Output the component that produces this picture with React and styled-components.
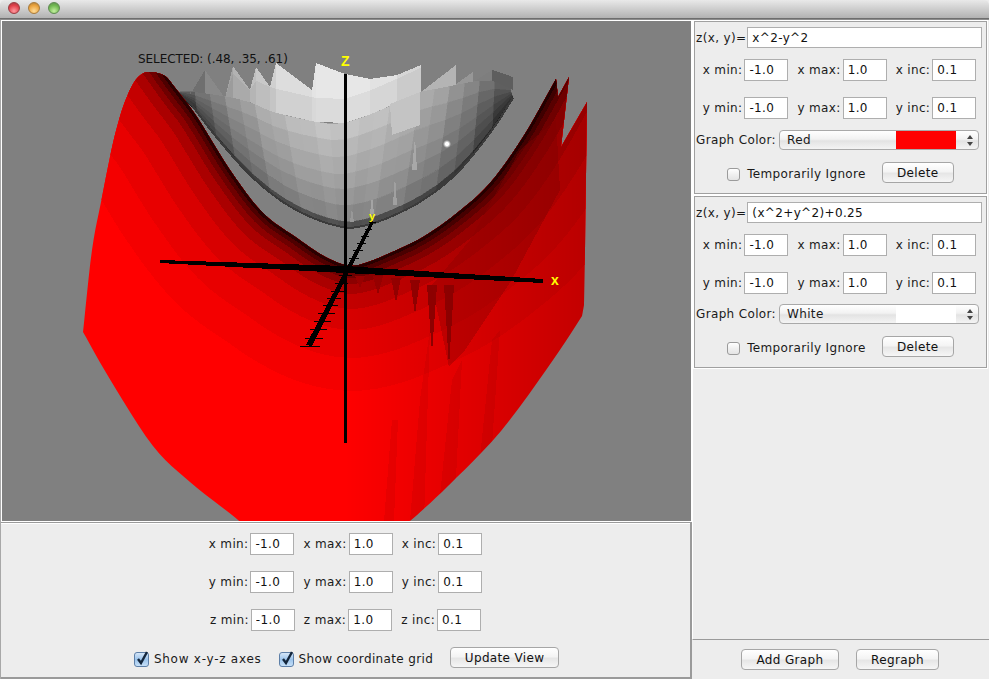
import React from "react";
import styled, { createGlobalStyle } from "styled-components";

const FONT = `"DejaVu Sans", "Liberation Sans", sans-serif`;
const TRACK = "0.35px";

const GlobalStyle = createGlobalStyle`
  html, body { margin: 0; padding: 0; background: #fff; overflow: hidden; }
  body { font-family: ${FONT}; }
`;

/* ---------- surface plot geometry, all in page pixels ---------- */

const interp = (pts, x) => {
  if (x <= pts[0][0]) return pts[0][1];
  for (let i = 1; i < pts.length; i++) {
    if (x <= pts[i][0]) {
      const t = (x - pts[i - 1][0]) / (pts[i][0] - pts[i - 1][0] || 1);
      return pts[i - 1][1] + (pts[i][1] - pts[i - 1][1]) * t;
    }
  }
  return pts[pts.length - 1][1];
};

// catmull-rom resample so the hand read points give a round curve
const smooth = (pts, steps = 6) => {
  const out = [];
  for (let i = 0; i < pts.length - 1; i++) {
    const p0 = pts[Math.max(0, i - 1)];
    const p1 = pts[i];
    const p2 = pts[i + 1];
    const p3 = pts[Math.min(pts.length - 1, i + 2)];
    for (let s = 0; s < steps; s++) {
      const t = s / steps;
      const f = (a, b, c, d) =>
        0.5 * (2 * b + (c - a) * t + (2 * a - 5 * b + 4 * c - d) * t * t + (3 * b - a - 3 * c + d) * t * t * t);
      out.push([f(p0[0], p1[0], p2[0], p3[0]), f(p0[1], p1[1], p2[1], p3[1])]);
    }
  }
  out.push(pts[pts.length - 1]);
  return out;
};

const toPoints = (pts) => pts.map((p) => `${p[0].toFixed(1)},${p[1].toFixed(1)}`).join(" ");
const grey = (v) => {
  const g = Math.max(0, Math.min(255, Math.round(v)));
  return `rgb(${g},${g},${g})`;
};

const INNER_EDGE = [
  [173, 85], [197, 117], [230, 170], [263, 213], [297, 238], [322, 255], [345, 265], [362, 264], [390, 253],
  [423, 237], [457, 213], [490, 183], [523, 137], [556, 79],
];
const RED_OUTLINE = [
  ...smooth([[173, 85], [165, 76], [152, 72], [142, 74], [133, 84], [123, 107], [113, 143], [102, 197], [92, 250], [83, 332]]),
  ...smooth([[83, 332], [111, 381], [153, 446], [190, 482], [232, 515], [240, 522]]),
  ...smooth([[408, 522], [417, 515], [449, 485], [501, 431], [553, 360], [582, 316]]),
  [584, 305], [585, 250], [587, 102], [561, 147], [569, 77], [558, 97],
  ...smooth(INNER_EDGE).reverse(),
];
const RED_INNER = smooth([[120, 10], ...INNER_EDGE, [590, 20]]);
const RED_BANDS = [
  [125, "#f40000"], [92, "#e80000"], [64, "#d80000"], [43, "#c40000"], [28, "#aa0000"],
  [18, "#8c0000"], [12, "#6e0000"], [7, "#4e0000"], [3, "#2a0000"],
];
const offsetCurve = (pts, d) =>
  pts.map((p, i) => {
    const a = pts[Math.max(0, i - 1)];
    const b = pts[Math.min(pts.length - 1, i + 1)];
    const len = Math.hypot(b[0] - a[0], b[1] - a[1]) || 1;
    return [p[0] - ((b[1] - a[1]) / len) * d, p[1] + ((b[0] - a[0]) / len) * d];
  });
const RED_SPIKES = [
  [360, 276, 288], [378, 276, 295], [396, 278, 302], [415, 280, 314], [432, 285, 353], [449, 285, 367],
];
const RED_STREAKS = [
  "410,521 420,400 430,330 424,521",
  "440,495 452,380 462,360 456,478",
  "480,458 492,340 500,330 492,445",
  "384,521 392,420 398,420 394,521",
];

const GREY_BOTTOM = smooth([
  [177, 93], [190, 103], [213, 133], [247, 172], [280, 200], [313, 218], [343, 227], [363, 226], [390, 217],
  [423, 200], [457, 173], [490, 133], [513, 98],
]);
const GREY_SHELF = smooth([
  [177, 92], [195, 92], [243, 100], [273, 112], [317, 122], [345, 123], [388, 107], [420, 92], [456, 85],
  [490, 80], [513, 90],
]);
const GREY_TOP = [
  [190, 95], [205, 70], [225, 98], [233, 66], [250, 90], [256, 67], [270, 87], [276, 63], [312, 90], [316, 63],
  [345, 74], [370, 79], [397, 75], [421, 65], [421, 92], [456, 65], [456, 84], [473, 72], [473, 82], [492, 70],
  [513, 77], [513, 90],
];
const GREY_LEVELS = [0, 0.06, 0.214, 0.37, 0.515, 0.68, 0.845, 1];
const GREY_TONES = [80, 135, 150, 162, 172, 182, 195];
const COLS = 22;

const sideShade = (x, k = 0.68) => 1 - k * Math.pow(Math.min(1, Math.abs(x - 345) / 168), 2.2);

const buildGreyCells = () => {
  const cells = [];
  const bottomX = (w) => 345 + 168 * Math.sign(w) * Math.pow(Math.abs(w), 1.35);
  const topX = (w) => 345 + 165 * w;
  const at = (w, v) => {
    const bx = bottomX(w);
    const tx = topX(w);
    const by = interp(GREY_BOTTOM, bx);
    const ty = interp(GREY_SHELF, tx);
    return [bx + (tx - bx) * v, by + (ty - by) * v];
  };
  for (let c = 0; c < COLS; c++) {
    const w0 = (c / COLS) * 2 - 1;
    const w1 = ((c + 1) / COLS) * 2 - 1;
    const jitter = c % 2 ? 2 : -2;
    for (let b = 0; b < GREY_TONES.length; b++) {
      const v0 = GREY_LEVELS[b];
      const v1 = GREY_LEVELS[b + 1];
      const mid = (at(w0, v0)[0] + at(w1, v1)[0]) / 2;
      cells.push({
        key: `${c}-${b}`,
        points: toPoints([at(w0, v0), at(w1, v0), at(w1, v1), at(w0, v1)]),
        fill: grey((GREY_TONES[b] + jitter) * sideShade(mid, 0.78 - b * 0.03)),
      });
    }
  }
  return cells;
};

const buildGreyTop = () => {
  const out = [];
  for (let i = 0; i < GREY_TOP.length - 1; i++) {
    const [ax, ay] = GREY_TOP[i];
    const [bx, by] = GREY_TOP[i + 1];
    if (ax === bx) continue;
    const shade = sideShade((ax + bx) / 2);
    const sa = interp(GREY_SHELF, ax);
    const sb = interp(GREY_SHELF, bx);
    out.push({ key: `t${i}`, points: toPoints([[ax, sa], [ax, ay], [bx, by], [bx, sb]]), fill: grey(226 * shade + 6) });
    out.push({
      key: `m${i}`,
      points: toPoints([[ax, sa], [ax, Math.max(sa - 24, ay)], [bx, Math.max(sb - 24, by)], [bx, sb]]),
      fill: grey(214 * shade + 6),
    });
  }
  return out;
};

const GREY_CELLS = buildGreyCells();
const GREY_TOP_CELLS = buildGreyTop();
const Y_TICKS = [346, 338, 329, 321, 313, 305, 298, 291, 283, 275, 258, 250, 243, 236, 229, 222];

const SurfacePlot = () => (
  <PlotSvg viewBox="2 21 689 500" width="689" height="500" shapeRendering="crispEdges">
    <defs>
      <clipPath id="redClip">
        <polygon points={toPoints(RED_OUTLINE)} />
      </clipPath>
      <linearGradient id="rightShade" gradientUnits="userSpaceOnUse" x1="345" y1="0" x2="590" y2="0">
        <stop offset="0" stopColor="#000" stopOpacity="0" />
        <stop offset="1" stopColor="#000" stopOpacity="0.24" />
      </linearGradient>
      <radialGradient id="dotGlow">
        <stop offset="0.4" stopColor="#fff" />
        <stop offset="1" stopColor="#fff" stopOpacity="0" />
      </radialGradient>
    </defs>
    <rect x="2" y="21" width="689" height="500" fill="#808080" />

    {GREY_CELLS.map((c) => <polygon key={c.key} points={c.points} fill={c.fill} stroke={c.fill} strokeWidth="0.5" />)}
    {GREY_TOP_CELLS.map((c) => <polygon key={c.key} points={c.points} fill={c.fill} />)}
    <polygon points="390,104 420,92 420,125 392,135" fill="#c4c4c4" />
    <polygon points="415,137 417,170 412,170" fill="#a8a8a8" />
    <polygon points="395,175 397,205 393,205" fill="#a0a0a0" />
    <polygon points="372,195 374,214 370,214" fill="#a4a4a4" />
    <polygon points="352,208 354,222 350,222" fill="#989898" />
    <polyline points={toPoints(GREY_BOTTOM)} fill="none" stroke="#3a3a3a" strokeWidth="2" />

    <g clipPath="url(#redClip)">
      <rect x="2" y="21" width="689" height="500" fill="#ff0000" />
      {RED_BANDS.map(([d, color]) => (
        <polygon key={d} points={toPoints([...offsetCurve(RED_INNER, d), [700, 0], [0, 0]])} fill={color} />
      ))}
      {RED_SPIKES.map(([x, y0, y1]) => (
        <polygon key={x} points={`${x - 5},${y0} ${x + 5},${y0} ${x},${y1}`} fill="#9a0000" />
      ))}
      <polygon points="449,367 465,350 511,281 560,190 556,120 520,150 470,240 432,285" fill="#a00000" opacity="0.4" />
      {RED_STREAKS.map((pts) => <polygon key={pts} points={pts} fill="#c00000" opacity="0.22" />)}
      <rect x="345" y="21" width="250" height="500" fill="url(#rightShade)" />
    </g>

    <circle cx="447" cy="144" r="4" fill="url(#dotGlow)" />

    <polygon points="160,260 345,266 543,279 543,283 345,273 160,263" fill="#000" />
    <polygon points="371,221 374,222 312,346 306,345" fill="#000" />
    {Y_TICKS.map((y) => {
      const half = 3 + (y - 222) * 0.05;
      const cx = 372 - (y - 221) * 0.5;
      return <line key={y} x1={cx - half} x2={cx + half + 1} y1={y} y2={y} stroke="#000" strokeWidth="1" />;
    })}
    <rect x="344" y="74" width="3" height="369" fill="#000" />

    <AxisLabel x="341" y="66" fontSize="14">Z</AxisLabel>
    <AxisLabel x="369" y="220" fontSize="11">y</AxisLabel>
    <AxisLabel x="551" y="285" fontSize="14">x</AxisLabel>
  </PlotSvg>
);

/* ---------- chrome ---------- */

const Window = styled.div`
  width: 989px;
  height: 679px;
  display: flex;
  flex-direction: column;
  background: #ededed;
  color: #1a1a1a;
  font-size: 12px;
  letter-spacing: ${TRACK};
`;
const TitleBar = styled.div`
  height: 19px;
  flex: none;
  display: flex;
  align-items: center;
  gap: 8px;
  padding: 0 0 3px 8px;
  box-sizing: border-box;
  border-radius: 5px 5px 0 0;
  background: linear-gradient(#e9e9e9, #b2b2b2);
  border-bottom: 1px solid #6e6e6e;
`;
const Light = styled.span`
  width: 12px;
  height: 12px;
  border-radius: 50%;
  box-sizing: border-box;
  border: 1px solid ${(p) => p.$edge};
  background: radial-gradient(circle at 50% 80%, ${(p) => p.$glow} 0%, ${(p) => p.$color} 60%, ${(p) => p.$edge} 100%);
`;
const Main = styled.div`
  flex: 1;
  min-height: 0;
  display: flex;
  border-top: 1px solid #8c8c8c;
`;
const LeftColumn = styled.div`
  width: 692px;
  flex: none;
  box-sizing: border-box;
  display: flex;
  flex-direction: column;
  border-left: 1px solid #a8a8a8;
`;
const GraphFrame = styled.div`
  border: 1px solid #fff;
  border-right: 2px solid #fff;
  flex: none;
  height: 500px;
  position: relative;
`;
const PlotSvg = styled.svg`
  display: block;
`;
const AxisLabel = styled.text`
  fill: #ffff00;
  font-family: "Liberation Sans", sans-serif;
  font-weight: 700;
`;
const SelectedText = styled.div`
  position: absolute;
  left: 136px;
  top: 30px;
  font-size: 12px;
  letter-spacing: -0.08px;
  line-height: 16px;
  color: #111;
  white-space: nowrap;
`;
const ViewPanel = styled.div`
  flex: 1;
  display: flex;
  flex-direction: column;
  align-items: center;
  padding-top: 10px;
  box-sizing: border-box;
  border-top: 1px solid #9a9a9a;
  border-right: 2px solid #9a9a9a;
  border-bottom: 2px solid #9a9a9a;
  box-shadow: inset 0 1px 0 #fff;
`;
const RightColumn = styled.div`
  flex: 1;
  display: flex;
  flex-direction: column;
  min-width: 0;
`;
const CardList = styled.div`
  height: 620px;
  flex: none;
  box-sizing: border-box;
  padding: 1px 2px 0 1px;
  border-left: 1px solid #fff;
  border-bottom: 1px solid #9a9a9a;
  display: flex;
  flex-direction: column;
  gap: 2px;
`;
const Card = styled.div`
  height: ${(p) => p.$height}px;
  box-sizing: border-box;
  padding-top: 5px;
  border: 1px solid #a0a0a0;
  outline: 1px solid #fff;
  display: flex;
  flex-direction: column;
`;
const Row = styled.div`
  display: flex;
  align-items: center;
  justify-content: ${(p) => p.$justify || "center"};
  gap: ${(p) => p.$gap ?? 9}px;
  margin-top: ${(p) => p.$top || 0}px;
  padding-left: ${(p) => p.$left || 0}px;
  padding-right: ${(p) => p.$right || 0}px;
`;
const FieldGroup = styled.label`
  display: flex;
  align-items: center;
  gap: 2px;
  white-space: nowrap;
`;
const TextBox = styled.input`
  width: ${(p) => p.$width || 44}px;
  height: ${(p) => p.$height || 22}px;
  box-sizing: border-box;
  flex: ${(p) => (p.$grow ? 1 : "none")};
  min-width: 0;
  padding: 0 4px;
  margin: 0;
  border: 1px solid #aeaeae;
  border-radius: 0;
  outline: none;
  background: #fff;
  color: #111;
  font-family: ${FONT};
  font-size: 12px;
  letter-spacing: ${TRACK};
`;
const SelectBox = styled.div`
  width: 200px;
  height: 20px;
  box-sizing: border-box;
  position: relative;
  border: 1px solid #a9a9a9;
  border-radius: 4px;
  background: linear-gradient(#fff, #f2f2f2 45%, #e3e3e3 55%, #f4f4f4);
  display: flex;
  align-items: center;
  padding-left: 7px;
`;
const Swatch = styled.span`
  position: absolute;
  left: 116px;
  top: 0;
  bottom: 0;
  width: 60px;
  background: ${(p) => p.$color};
`;
const Stepper = styled.svg`
  position: absolute;
  right: 4px;
  top: 3px;
`;
const CheckBox = styled.span`
  width: ${(p) => (p.$checked ? 15 : 13)}px;
  height: ${(p) => (p.$checked ? 15 : 13)}px;
  flex: none;
  box-sizing: border-box;
  position: relative;
  display: block;
  border-radius: 3px;
  border: 1px solid ${(p) => (p.$checked ? "#5d7fa8" : "#9b9b9b")};
  background: ${(p) =>
    p.$checked ? "linear-gradient(#d5e6f8, #9cc4ec 50%, #c6e0f8)" : "linear-gradient(#fff, #f0f0f0 50%, #e4e4e4)"};
`;
const CheckMark = styled.svg`
  position: absolute;
  left: 0;
  top: -3px;
`;
const CheckLabel = styled.label`
  display: flex;
  align-items: center;
  gap: ${(p) => p.$gap || 7}px;
  margin-top: 3px;
  white-space: nowrap;
  letter-spacing: ${(p) => p.$tracking || TRACK};
`;
const PushButton = styled.button`
  width: ${(p) => p.$width}px;
  height: 21px;
  flex: none;
  box-sizing: border-box;
  padding: 0;
  border: 1px solid #a6a6a6;
  border-radius: 4px;
  background: linear-gradient(#fff, #f4f4f4 45%, #e6e6e6 55%, #f6f6f6);
  color: #111;
  font-family: ${FONT};
  font-size: 12px;
  letter-spacing: ${TRACK};
  line-height: 18px;
`;
const BottomBar = styled.div`
  flex: 1;
  display: flex;
  justify-content: flex-start;
  align-items: flex-start;
  gap: 17px;
  padding: 9px 0 0 49px;
  border-radius: 0 0 5px 0;
`;

/* ---------- small parts ---------- */

const Field = ({ label, value }) => (
  <FieldGroup>
    {label}
    <TextBox readOnly value={value} />
  </FieldGroup>
);

const RangeRow = ({ axis, top, right, min = "-1.0", max = "1.0", inc = "0.1" }) => (
  <Row $top={top} $right={right}>
    <Field label={`${axis} min:`} value={min} />
    <Field label={`${axis} max:`} value={max} />
    <Field label={`${axis} inc:`} value={inc} />
  </Row>
);

const Check = ({ checked, label, gap, tracking }) => (
  <CheckLabel $gap={gap} $tracking={tracking}>
    <CheckBox $checked={checked}>
      {checked && (
        <CheckMark width="15" height="16" viewBox="0 0 15 16">
          <path d="M3 9 L6 13 L12 2" fill="none" stroke="#14263c" strokeWidth="2.4" />
        </CheckMark>
      )}
    </CheckBox>
    {label}
  </CheckLabel>
);

const GraphCard = ({ formula, colorName, swatch, height, selectTop }) => (
  <Card $height={height}>
    <Row $justify="flex-start" $gap={1} $left={1} $right={4}>
      z(x, y)=
      <TextBox readOnly value={formula} $grow $height={21} />
    </Row>
    <RangeRow axis="x" top={11} right={2} />
    <RangeRow axis="y" top={16} right={2} />
    <Row $justify="flex-start" $gap={3} $left={1} $top={selectTop}>
      Graph Color:
      <SelectBox>
        {colorName}
        <Swatch $color={swatch} />
        <Stepper width="8" height="13" viewBox="0 0 8 13">
          <path d="M4 1 L7 5 H1 Z M4 12 L1 8 H7 Z" fill="#444" />
        </Stepper>
      </SelectBox>
    </Row>
    <Row $gap={16} $top={12}>
      <Check label="Temporarily Ignore" />
      <PushButton $width={72}>Delete</PushButton>
    </Row>
  </Card>
);

export default function App() {
  return (
    <>
      <GlobalStyle />
      <Window>
        <TitleBar>
          <Light $color="#e0404a" $glow="#ff9aa0" $edge="#9a3a40" />
          <Light $color="#eaa23c" $glow="#ffdc98" $edge="#a87a3a" />
          <Light $color="#70b850" $glow="#c4f0a0" $edge="#5e8a50" />
        </TitleBar>
        <Main>
          <LeftColumn>
            <GraphFrame>
              <SurfacePlot />
              <SelectedText>SELECTED: (.48, .35, .61)</SelectedText>
            </GraphFrame>
            <ViewPanel>
              <RangeRow axis="x" />
              <RangeRow axis="y" top={16} />
              <RangeRow axis="z" top={16} />
              <Row $top={16} $gap={17} $left={2}>
                <Check checked label="Show x-y-z axes" gap={5} tracking="0.75px" />
                <Check checked label="Show coordinate grid" gap={5} />
                <PushButton $width={109}>Update View</PushButton>
              </Row>
            </ViewPanel>
          </LeftColumn>
          <RightColumn>
            <CardList>
              <GraphCard formula="x^2-y^2" colorName="Red" swatch="#ff0000" height={173} selectTop={11} />
              <GraphCard formula="(x^2+y^2)+0.25" colorName="White" swatch="#ffffff" height={172} selectTop={10} />
            </CardList>
            <BottomBar>
              <PushButton $width={98}>Add Graph</PushButton>
              <PushButton $width={83}>Regraph</PushButton>
            </BottomBar>
          </RightColumn>
        </Main>
      </Window>
    </>
  );
}
